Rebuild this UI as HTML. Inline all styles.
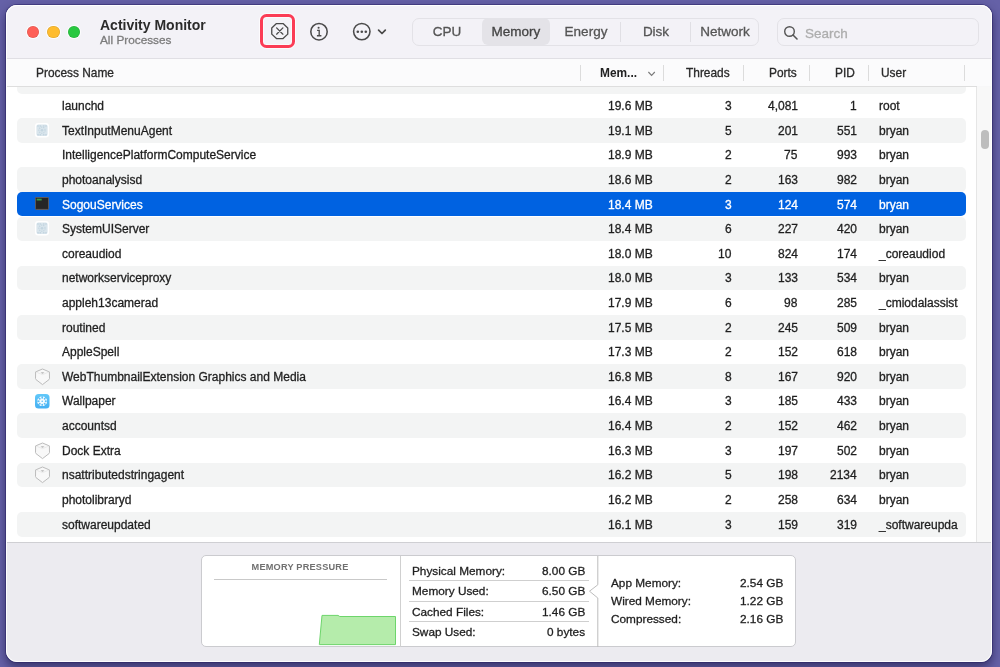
<!DOCTYPE html>
<html><head><meta charset="utf-8">
<style>
* { margin:0; padding:0; box-sizing:border-box; }
html,body { width:1000px; height:667px; overflow:hidden; }
body { font-family:"Liberation Sans", sans-serif; position:relative;
  background:#6561a7; }
.t { position:absolute; white-space:nowrap; line-height:normal; -webkit-text-stroke:0.3px currentColor; will-change:transform; }
#win { position:absolute; left:6px; top:5px; width:986px; height:657px; border-radius:11px;
  background:#ecebf0; overflow:hidden; box-shadow: 0 0 0 1px rgba(40,34,100,0.5), 0 3px 10px rgba(15,10,50,0.42), 0 8px 8px rgba(15,10,50,0.18); }
#winhl { position:absolute; left:6px; top:5px; width:986px; height:657px; border-radius:11px; border:1px solid rgba(255,255,255,0.95); z-index:50; }
#toolbar { position:absolute; left:6px; top:5px; width:986px; height:53.9px; background:#f3f2f7; border-bottom:1px solid #e0dfe4; border-radius:11px 11px 0 0; }
.tl { position:absolute; top:25.6px; width:12.6px; height:12.6px; border-radius:50%; box-shadow: inset 0 0 0 0.6px rgba(0,0,0,0.13), 0 0 0 1px rgba(255,255,255,0.85); }
#killbox { position:absolute; left:259.8px; top:13.8px; width:35.5px; height:34.2px; border:3.3px solid #fb3c55; border-radius:6.5px; box-shadow:0 0 0 1px rgba(255,255,255,0.7), inset 0 0 0 1px rgba(255,255,255,0.6); }
.abs { position:absolute; }
#seg { position:absolute; left:412px; top:17.5px; width:347px; height:28px; border:1px solid #e3e2e7; border-radius:7px; background:#f3f2f7; }
.segsel { position:absolute; left:481.5px; top:18.1px; width:68.5px; height:27px; background:#e4e3e8; border-radius:6px; }
.segdiv { position:absolute; top:22px; width:1px; height:19.5px; background:#e0dfe4; }
#search { position:absolute; left:777.3px; top:17.7px; width:201.7px; height:28px; border:1px solid #e3e2e7; border-radius:7px; background:#f3f2f7; }
#header { position:absolute; left:7px; top:58.9px; width:984px; height:28px; background:#fbfbfc; border-bottom:1px solid #dedede; }
.hdiv { position:absolute; top:65px; width:1px; height:15.5px; background:#dcdcdc; }
#table { position:absolute; left:7px; top:86.9px; width:984px; height:456.1px; background:#fff; overflow:hidden; border-bottom:1px solid #cfcfd3; }
#rows { position:absolute; left:-7px; top:-86.9px; width:1000px; height:667px; }
.row { position:absolute; left:16.7px; width:949.3px; height:24.67px; border-radius:5px; }
.row.stripe { background:#f3f4f4; }
.row.sel { background:#0062e1; height:24.2px; }
.ic { position:absolute; line-height:0; }
#scroll { position:absolute; left:969.4px; top:0; width:15px; height:456px; background:#f8f8f8; border-left:1px solid #e6e6e6; }
#thumb { position:absolute; left:3.7px; top:43.6px; width:7.8px; height:18.2px; border-radius:4px; background:#bdbdbd; }
#panel { position:absolute; left:201.4px; top:554.7px; width:595px; height:92.2px; background:#fff; border:1px solid #cbcbcf; border-radius:5px; }
#mpline { position:absolute; left:213.8px; top:578.6px; width:173px; height:1.2px; background:#c9c9c9; }
.msep { position:absolute; left:408.8px; width:180.5px; height:1px; background:#cfcfcf; }
</style></head><body>
<div id="win"></div>
<div id="toolbar"></div>
<div class="tl" style="left:26.7px;background:#fe5f57;"></div>
<div class="tl" style="left:47.2px;background:#febc2e;"></div>
<div class="tl" style="left:67.7px;background:#28c840;"></div>
<div class="t" style="left:99.80px;top:17.13px;font-size:14px;color:#2b2b2b;font-weight:700;-webkit-text-stroke:0;">Activity Monitor</div>
<div class="t" style="left:99.80px;top:33.32px;font-size:11.8px;color:#7b7b7b;">All Processes</div>
<div id="killbox"></div>
<svg class="abs" style="left:270px;top:22px" width="20" height="19" viewBox="0 0 20 19"><path d="M6.45 1.55 L13.05 1.55 L17.75 5.95 L17.75 12.15 L13.05 16.55 L6.45 16.55 L1.75 12.15 L1.75 5.95 Z" fill="none" stroke="#4a4a4a" stroke-width="1.3" stroke-linejoin="round"/><path d="M6.6 5.9 L12.9 12.2 M12.9 5.9 L6.6 12.2" stroke="#4a4a4a" stroke-width="1.25" stroke-linecap="round"/></svg>
<svg class="abs" style="left:309.1px;top:21.5px" width="20" height="20" viewBox="0 0 20 20"><circle cx="10" cy="9.7" r="8.2" fill="none" stroke="#4a4a4a" stroke-width="1.55"/><circle cx="9.6" cy="5.8" r="1.05" fill="#4a4a4a"/><path d="M8.1 8.4 L10.2 8.4 L10.2 13.7 M7.9 13.75 L12.4 13.75" fill="none" stroke="#4a4a4a" stroke-width="1.35"/></svg>
<svg class="abs" style="left:351.5px;top:22px" width="20" height="20" viewBox="0 0 20 20"><circle cx="9.8" cy="9.6" r="8.2" fill="none" stroke="#4a4a4a" stroke-width="1.55"/><circle cx="5.8" cy="9.7" r="1.3" fill="#4a4a4a"/><circle cx="9.8" cy="9.7" r="1.3" fill="#4a4a4a"/><circle cx="13.8" cy="9.7" r="1.3" fill="#4a4a4a"/></svg>
<svg class="abs" style="left:376px;top:27px" width="12" height="9" viewBox="0 0 12 9"><path d="M2.6 3.1 L6 6.5 L9.3 3.1" fill="none" stroke="#4a4a4a" stroke-width="1.75" stroke-linecap="round" stroke-linejoin="round"/></svg>
<div id="seg"></div>
<div class="segsel"></div>
<div class="segdiv" style="left:620px"></div>
<div class="segdiv" style="left:689.8px"></div>
<div class="t" style="left:446.50px;top:23.88px;font-size:13.5px;color:#555;transform:translateX(-50%)">CPU</div>
<div class="t" style="left:516.00px;top:23.88px;font-size:13.5px;color:#444;transform:translateX(-50%)">Memory</div>
<div class="t" style="left:585.50px;top:23.88px;font-size:13.5px;color:#555;transform:translateX(-50%)">Energy</div>
<div class="t" style="left:655.50px;top:23.88px;font-size:13.5px;color:#555;transform:translateX(-50%)">Disk</div>
<div class="t" style="left:725.00px;top:23.88px;font-size:13.5px;color:#555;transform:translateX(-50%)">Network</div>
<div id="search"></div>
<svg class="abs" style="left:783px;top:25px" width="16" height="16" viewBox="0 0 16 16"><circle cx="6.5" cy="6.5" r="4.8" fill="none" stroke="#555" stroke-width="1.4"/><path d="M10 10 L14 14" stroke="#555" stroke-width="1.6" stroke-linecap="round"/></svg>
<div class="t" style="left:805.20px;top:25.98px;font-size:13.5px;color:#adadad;">Search</div>
<div id="header"></div>
<div class="t" style="left:36.40px;top:66.13px;font-size:11.9px;color:#2a2a2a;">Process Name</div>
<div class="t" style="left:599.50px;top:66.13px;font-size:11.9px;color:#222;font-weight:700;-webkit-text-stroke:0;">Mem...</div>
<div class="t" style="right:270.20px;top:66.13px;font-size:11.9px;color:#2a2a2a;">Threads</div>
<div class="t" style="right:203.50px;top:66.13px;font-size:11.9px;color:#2a2a2a;">Ports</div>
<div class="t" style="right:145.20px;top:66.13px;font-size:11.9px;color:#2a2a2a;">PID</div>
<div class="t" style="left:881.20px;top:66.13px;font-size:11.9px;color:#2a2a2a;">User</div>
<div class="hdiv" style="left:580.25px"></div>
<div class="hdiv" style="left:663.25px"></div>
<div class="hdiv" style="left:742.50px"></div>
<div class="hdiv" style="left:809.00px"></div>
<div class="hdiv" style="left:867.50px"></div>
<div class="hdiv" style="left:964.00px"></div>
<svg class="abs" style="left:646px;top:70px" width="11" height="8" viewBox="0 0 11 8"><path d="M2.4 2 L5.6 5.3 L8.8 2" fill="none" stroke="#7a7a7a" stroke-width="1.15"/></svg>
<div class="abs" style="left:977px;top:86px;width:14px;height:1.5px;background:#f7f7f8"></div>
<div id="table">
 <div id="rows">
<div class="row stripe" style="top:68.89px"></div>
<div class="row" style="top:93.50px"></div>
<div class="t" style="left:61.60px;top:99.14px;font-size:12.0px;color:#1f1f1f;">launchd</div>
<div class="t" style="right:347.40px;top:99.14px;font-size:12.0px;color:#1f1f1f;">19.6 MB</div>
<div class="t" style="right:268.50px;top:99.14px;font-size:12.0px;color:#1f1f1f;">3</div>
<div class="t" style="right:202.30px;top:99.14px;font-size:12.0px;color:#1f1f1f;">4,081</div>
<div class="t" style="right:143.40px;top:99.14px;font-size:12.0px;color:#1f1f1f;">1</div>
<div class="t" style="left:879.10px;top:99.14px;font-size:12.0px;color:#1f1f1f;">root</div>
<div class="row stripe" style="top:118.11px"></div>
<div class="ic" style="left:34.90px;top:123.01px"><svg width="14" height="15" viewBox="0 0 14 15"><rect x="0" y="0" width="14" height="14.5" rx="3" fill="#fff"/><rect x="1.4" y="1.4" width="11.2" height="11.7" rx="2" fill="#d9e5ec"/><g fill="#c3d5e0"><rect x="2.3" y="2.3" width="1.4" height="1.4"/><rect x="4.6" y="2.3" width="1.4" height="1.4"/><rect x="8" y="2.3" width="1.4" height="1.4"/><rect x="10.3" y="2.3" width="1.4" height="1.4"/><rect x="2.3" y="11" width="1.4" height="1.4"/><rect x="4.6" y="11" width="1.4" height="1.4"/><rect x="8" y="11" width="1.4" height="1.4"/><rect x="10.3" y="11" width="1.4" height="1.4"/></g><circle cx="7" cy="7.2" r="3.1" fill="none" stroke="#c3d5e0" stroke-width="1.1" stroke-dasharray="1.3 0.9"/><circle cx="7" cy="7.2" r="1.3" fill="#c3d5e0"/></svg></div>
<div class="t" style="left:61.60px;top:123.75px;font-size:12.0px;color:#1f1f1f;">TextInputMenuAgent</div>
<div class="t" style="right:347.40px;top:123.75px;font-size:12.0px;color:#1f1f1f;">19.1 MB</div>
<div class="t" style="right:268.50px;top:123.75px;font-size:12.0px;color:#1f1f1f;">5</div>
<div class="t" style="right:202.30px;top:123.75px;font-size:12.0px;color:#1f1f1f;">201</div>
<div class="t" style="right:143.40px;top:123.75px;font-size:12.0px;color:#1f1f1f;">551</div>
<div class="t" style="left:879.10px;top:123.75px;font-size:12.0px;color:#1f1f1f;">bryan</div>
<div class="row" style="top:142.72px"></div>
<div class="t" style="left:61.60px;top:148.36px;font-size:12.0px;color:#1f1f1f;">IntelligencePlatformComputeService</div>
<div class="t" style="right:347.40px;top:148.36px;font-size:12.0px;color:#1f1f1f;">18.9 MB</div>
<div class="t" style="right:268.50px;top:148.36px;font-size:12.0px;color:#1f1f1f;">2</div>
<div class="t" style="right:202.30px;top:148.36px;font-size:12.0px;color:#1f1f1f;">75</div>
<div class="t" style="right:143.40px;top:148.36px;font-size:12.0px;color:#1f1f1f;">993</div>
<div class="t" style="left:879.10px;top:148.36px;font-size:12.0px;color:#1f1f1f;">bryan</div>
<div class="row stripe" style="top:167.33px"></div>
<div class="t" style="left:61.60px;top:172.97px;font-size:12.0px;color:#1f1f1f;">photoanalysisd</div>
<div class="t" style="right:347.40px;top:172.97px;font-size:12.0px;color:#1f1f1f;">18.6 MB</div>
<div class="t" style="right:268.50px;top:172.97px;font-size:12.0px;color:#1f1f1f;">2</div>
<div class="t" style="right:202.30px;top:172.97px;font-size:12.0px;color:#1f1f1f;">163</div>
<div class="t" style="right:143.40px;top:172.97px;font-size:12.0px;color:#1f1f1f;">982</div>
<div class="t" style="left:879.10px;top:172.97px;font-size:12.0px;color:#1f1f1f;">bryan</div>
<div class="row sel" style="top:191.94px"></div>
<div class="ic" style="left:35.20px;top:197.44px"><svg width="14" height="13" viewBox="0 0 14 13"><rect x="0.4" y="0.4" width="13.2" height="12" rx="0.8" fill="#262626" stroke="#7a6550" stroke-width="0.8"/><rect x="1.7" y="1.7" width="5" height="1.8" fill="#3d9b45"/></svg></div>
<div class="t" style="left:61.60px;top:197.58px;font-size:12.0px;color:#ffffff;">SogouServices</div>
<div class="t" style="right:347.40px;top:197.58px;font-size:12.0px;color:#ffffff;">18.4 MB</div>
<div class="t" style="right:268.50px;top:197.58px;font-size:12.0px;color:#ffffff;">3</div>
<div class="t" style="right:202.30px;top:197.58px;font-size:12.0px;color:#ffffff;">124</div>
<div class="t" style="right:143.40px;top:197.58px;font-size:12.0px;color:#ffffff;">574</div>
<div class="t" style="left:879.10px;top:197.58px;font-size:12.0px;color:#ffffff;">bryan</div>
<div class="row stripe" style="top:216.55px"></div>
<div class="ic" style="left:34.90px;top:221.45px"><svg width="14" height="15" viewBox="0 0 14 15"><rect x="0" y="0" width="14" height="14.5" rx="3" fill="#fff"/><rect x="1.4" y="1.4" width="11.2" height="11.7" rx="2" fill="#d9e5ec"/><g fill="#c3d5e0"><rect x="2.3" y="2.3" width="1.4" height="1.4"/><rect x="4.6" y="2.3" width="1.4" height="1.4"/><rect x="8" y="2.3" width="1.4" height="1.4"/><rect x="10.3" y="2.3" width="1.4" height="1.4"/><rect x="2.3" y="11" width="1.4" height="1.4"/><rect x="4.6" y="11" width="1.4" height="1.4"/><rect x="8" y="11" width="1.4" height="1.4"/><rect x="10.3" y="11" width="1.4" height="1.4"/></g><circle cx="7" cy="7.2" r="3.1" fill="none" stroke="#c3d5e0" stroke-width="1.1" stroke-dasharray="1.3 0.9"/><circle cx="7" cy="7.2" r="1.3" fill="#c3d5e0"/></svg></div>
<div class="t" style="left:61.60px;top:222.19px;font-size:12.0px;color:#1f1f1f;">SystemUIServer</div>
<div class="t" style="right:347.40px;top:222.19px;font-size:12.0px;color:#1f1f1f;">18.4 MB</div>
<div class="t" style="right:268.50px;top:222.19px;font-size:12.0px;color:#1f1f1f;">6</div>
<div class="t" style="right:202.30px;top:222.19px;font-size:12.0px;color:#1f1f1f;">227</div>
<div class="t" style="right:143.40px;top:222.19px;font-size:12.0px;color:#1f1f1f;">420</div>
<div class="t" style="left:879.10px;top:222.19px;font-size:12.0px;color:#1f1f1f;">bryan</div>
<div class="row" style="top:241.16px"></div>
<div class="t" style="left:61.60px;top:246.80px;font-size:12.0px;color:#1f1f1f;">coreaudiod</div>
<div class="t" style="right:347.40px;top:246.80px;font-size:12.0px;color:#1f1f1f;">18.0 MB</div>
<div class="t" style="right:268.50px;top:246.80px;font-size:12.0px;color:#1f1f1f;">10</div>
<div class="t" style="right:202.30px;top:246.80px;font-size:12.0px;color:#1f1f1f;">824</div>
<div class="t" style="right:143.40px;top:246.80px;font-size:12.0px;color:#1f1f1f;">174</div>
<div class="t" style="left:879.10px;top:246.80px;font-size:12.0px;color:#1f1f1f;">_coreaudiod</div>
<div class="row stripe" style="top:265.77px"></div>
<div class="t" style="left:61.60px;top:271.41px;font-size:12.0px;color:#1f1f1f;">networkserviceproxy</div>
<div class="t" style="right:347.40px;top:271.41px;font-size:12.0px;color:#1f1f1f;">18.0 MB</div>
<div class="t" style="right:268.50px;top:271.41px;font-size:12.0px;color:#1f1f1f;">3</div>
<div class="t" style="right:202.30px;top:271.41px;font-size:12.0px;color:#1f1f1f;">133</div>
<div class="t" style="right:143.40px;top:271.41px;font-size:12.0px;color:#1f1f1f;">534</div>
<div class="t" style="left:879.10px;top:271.41px;font-size:12.0px;color:#1f1f1f;">bryan</div>
<div class="row" style="top:290.38px"></div>
<div class="t" style="left:61.60px;top:296.02px;font-size:12.0px;color:#1f1f1f;">appleh13camerad</div>
<div class="t" style="right:347.40px;top:296.02px;font-size:12.0px;color:#1f1f1f;">17.9 MB</div>
<div class="t" style="right:268.50px;top:296.02px;font-size:12.0px;color:#1f1f1f;">6</div>
<div class="t" style="right:202.30px;top:296.02px;font-size:12.0px;color:#1f1f1f;">98</div>
<div class="t" style="right:143.40px;top:296.02px;font-size:12.0px;color:#1f1f1f;">285</div>
<div class="t" style="left:879.10px;top:296.02px;font-size:12.0px;color:#1f1f1f;">_cmiodalassist</div>
<div class="row stripe" style="top:314.99px"></div>
<div class="t" style="left:61.60px;top:320.63px;font-size:12.0px;color:#1f1f1f;">routined</div>
<div class="t" style="right:347.40px;top:320.63px;font-size:12.0px;color:#1f1f1f;">17.5 MB</div>
<div class="t" style="right:268.50px;top:320.63px;font-size:12.0px;color:#1f1f1f;">2</div>
<div class="t" style="right:202.30px;top:320.63px;font-size:12.0px;color:#1f1f1f;">245</div>
<div class="t" style="right:143.40px;top:320.63px;font-size:12.0px;color:#1f1f1f;">509</div>
<div class="t" style="left:879.10px;top:320.63px;font-size:12.0px;color:#1f1f1f;">bryan</div>
<div class="row" style="top:339.60px"></div>
<div class="t" style="left:61.60px;top:345.24px;font-size:12.0px;color:#1f1f1f;">AppleSpell</div>
<div class="t" style="right:347.40px;top:345.24px;font-size:12.0px;color:#1f1f1f;">17.3 MB</div>
<div class="t" style="right:268.50px;top:345.24px;font-size:12.0px;color:#1f1f1f;">2</div>
<div class="t" style="right:202.30px;top:345.24px;font-size:12.0px;color:#1f1f1f;">152</div>
<div class="t" style="right:143.40px;top:345.24px;font-size:12.0px;color:#1f1f1f;">618</div>
<div class="t" style="left:879.10px;top:345.24px;font-size:12.0px;color:#1f1f1f;">bryan</div>
<div class="row stripe" style="top:364.21px"></div>
<div class="ic" style="left:34.00px;top:367.91px"><svg width="17" height="18" viewBox="0 0 17 18"><path d="M8.5 1 L15.4 3.9 L15.5 10.6 Q15.5 11.2 15 11.6 L8.5 16.6 L2 11.6 Q1.5 11.2 1.5 10.6 L1.6 3.9 Z" fill="#f8f8f8" stroke="#bcbcbc" stroke-width="1" stroke-linejoin="round"/><path d="M1.9 4 L8.5 6.6 L15.1 4" fill="none" stroke="#e4e4e4" stroke-width="0.7"/><path d="M6.5 4.4 Q8.5 3.4 10.5 4.4 L8.5 5.9 Z" fill="#c2c2c2"/></svg></div>
<div class="t" style="left:61.60px;top:369.85px;font-size:12.0px;color:#1f1f1f;">WebThumbnailExtension Graphics and Media</div>
<div class="t" style="right:347.40px;top:369.85px;font-size:12.0px;color:#1f1f1f;">16.8 MB</div>
<div class="t" style="right:268.50px;top:369.85px;font-size:12.0px;color:#1f1f1f;">8</div>
<div class="t" style="right:202.30px;top:369.85px;font-size:12.0px;color:#1f1f1f;">167</div>
<div class="t" style="right:143.40px;top:369.85px;font-size:12.0px;color:#1f1f1f;">920</div>
<div class="t" style="left:879.10px;top:369.85px;font-size:12.0px;color:#1f1f1f;">bryan</div>
<div class="row" style="top:388.82px"></div>
<div class="ic" style="left:34.85px;top:393.87px"><svg width="15" height="15" viewBox="0 0 15 15"><defs><linearGradient id="wg" x1="0" y1="0" x2="0" y2="1"><stop offset="0" stop-color="#62c8f9"/><stop offset="1" stop-color="#45b0f3"/></linearGradient></defs><rect x="0" y="0" width="14.5" height="14.5" rx="3.5" fill="url(#wg)"/><g fill="#f6fcff"><circle cx="7.2" cy="7.25" r="3.9"/><circle cx="10.25" cy="8.51" r="1.75"/><circle cx="8.46" cy="10.30" r="1.75"/><circle cx="5.94" cy="10.30" r="1.75"/><circle cx="4.15" cy="8.51" r="1.75"/><circle cx="4.15" cy="5.99" r="1.75"/><circle cx="5.94" cy="4.20" r="1.75"/><circle cx="8.46" cy="4.20" r="1.75"/><circle cx="10.25" cy="5.99" r="1.75"/></g><g fill="#5bbdf5"><circle cx="10.70" cy="7.25" r="0.95"/><circle cx="9.67" cy="9.72" r="0.95"/><circle cx="7.20" cy="10.75" r="0.95"/><circle cx="4.73" cy="9.72" r="0.95"/><circle cx="3.70" cy="7.25" r="0.95"/><circle cx="4.73" cy="4.78" r="0.95"/><circle cx="7.20" cy="3.75" r="0.95"/><circle cx="9.67" cy="4.78" r="0.95"/><circle cx="7.2" cy="7.25" r="0.8"/></g></svg></div>
<div class="t" style="left:61.60px;top:394.46px;font-size:12.0px;color:#1f1f1f;">Wallpaper</div>
<div class="t" style="right:347.40px;top:394.46px;font-size:12.0px;color:#1f1f1f;">16.4 MB</div>
<div class="t" style="right:268.50px;top:394.46px;font-size:12.0px;color:#1f1f1f;">3</div>
<div class="t" style="right:202.30px;top:394.46px;font-size:12.0px;color:#1f1f1f;">185</div>
<div class="t" style="right:143.40px;top:394.46px;font-size:12.0px;color:#1f1f1f;">433</div>
<div class="t" style="left:879.10px;top:394.46px;font-size:12.0px;color:#1f1f1f;">bryan</div>
<div class="row stripe" style="top:413.43px"></div>
<div class="t" style="left:61.60px;top:419.07px;font-size:12.0px;color:#1f1f1f;">accountsd</div>
<div class="t" style="right:347.40px;top:419.07px;font-size:12.0px;color:#1f1f1f;">16.4 MB</div>
<div class="t" style="right:268.50px;top:419.07px;font-size:12.0px;color:#1f1f1f;">2</div>
<div class="t" style="right:202.30px;top:419.07px;font-size:12.0px;color:#1f1f1f;">152</div>
<div class="t" style="right:143.40px;top:419.07px;font-size:12.0px;color:#1f1f1f;">462</div>
<div class="t" style="left:879.10px;top:419.07px;font-size:12.0px;color:#1f1f1f;">bryan</div>
<div class="row" style="top:438.04px"></div>
<div class="ic" style="left:34.00px;top:441.74px"><svg width="17" height="18" viewBox="0 0 17 18"><path d="M8.5 1 L15.4 3.9 L15.5 10.6 Q15.5 11.2 15 11.6 L8.5 16.6 L2 11.6 Q1.5 11.2 1.5 10.6 L1.6 3.9 Z" fill="#f8f8f8" stroke="#bcbcbc" stroke-width="1" stroke-linejoin="round"/><path d="M1.9 4 L8.5 6.6 L15.1 4" fill="none" stroke="#e4e4e4" stroke-width="0.7"/><path d="M6.5 4.4 Q8.5 3.4 10.5 4.4 L8.5 5.9 Z" fill="#c2c2c2"/></svg></div>
<div class="t" style="left:61.60px;top:443.68px;font-size:12.0px;color:#1f1f1f;">Dock Extra</div>
<div class="t" style="right:347.40px;top:443.68px;font-size:12.0px;color:#1f1f1f;">16.3 MB</div>
<div class="t" style="right:268.50px;top:443.68px;font-size:12.0px;color:#1f1f1f;">3</div>
<div class="t" style="right:202.30px;top:443.68px;font-size:12.0px;color:#1f1f1f;">197</div>
<div class="t" style="right:143.40px;top:443.68px;font-size:12.0px;color:#1f1f1f;">502</div>
<div class="t" style="left:879.10px;top:443.68px;font-size:12.0px;color:#1f1f1f;">bryan</div>
<div class="row stripe" style="top:462.65px"></div>
<div class="ic" style="left:34.00px;top:466.35px"><svg width="17" height="18" viewBox="0 0 17 18"><path d="M8.5 1 L15.4 3.9 L15.5 10.6 Q15.5 11.2 15 11.6 L8.5 16.6 L2 11.6 Q1.5 11.2 1.5 10.6 L1.6 3.9 Z" fill="#f8f8f8" stroke="#bcbcbc" stroke-width="1" stroke-linejoin="round"/><path d="M1.9 4 L8.5 6.6 L15.1 4" fill="none" stroke="#e4e4e4" stroke-width="0.7"/><path d="M6.5 4.4 Q8.5 3.4 10.5 4.4 L8.5 5.9 Z" fill="#c2c2c2"/></svg></div>
<div class="t" style="left:61.60px;top:468.29px;font-size:12.0px;color:#1f1f1f;">nsattributedstringagent</div>
<div class="t" style="right:347.40px;top:468.29px;font-size:12.0px;color:#1f1f1f;">16.2 MB</div>
<div class="t" style="right:268.50px;top:468.29px;font-size:12.0px;color:#1f1f1f;">5</div>
<div class="t" style="right:202.30px;top:468.29px;font-size:12.0px;color:#1f1f1f;">198</div>
<div class="t" style="right:143.40px;top:468.29px;font-size:12.0px;color:#1f1f1f;">2134</div>
<div class="t" style="left:879.10px;top:468.29px;font-size:12.0px;color:#1f1f1f;">bryan</div>
<div class="row" style="top:487.26px"></div>
<div class="t" style="left:61.60px;top:492.90px;font-size:12.0px;color:#1f1f1f;">photolibraryd</div>
<div class="t" style="right:347.40px;top:492.90px;font-size:12.0px;color:#1f1f1f;">16.2 MB</div>
<div class="t" style="right:268.50px;top:492.90px;font-size:12.0px;color:#1f1f1f;">2</div>
<div class="t" style="right:202.30px;top:492.90px;font-size:12.0px;color:#1f1f1f;">258</div>
<div class="t" style="right:143.40px;top:492.90px;font-size:12.0px;color:#1f1f1f;">634</div>
<div class="t" style="left:879.10px;top:492.90px;font-size:12.0px;color:#1f1f1f;">bryan</div>
<div class="row stripe" style="top:511.87px"></div>
<div class="t" style="left:61.60px;top:517.51px;font-size:12.0px;color:#1f1f1f;">softwareupdated</div>
<div class="t" style="right:347.40px;top:517.51px;font-size:12.0px;color:#1f1f1f;">16.1 MB</div>
<div class="t" style="right:268.50px;top:517.51px;font-size:12.0px;color:#1f1f1f;">3</div>
<div class="t" style="right:202.30px;top:517.51px;font-size:12.0px;color:#1f1f1f;">159</div>
<div class="t" style="right:143.40px;top:517.51px;font-size:12.0px;color:#1f1f1f;">319</div>
<div class="t" style="left:879.10px;top:517.51px;font-size:12.0px;color:#1f1f1f;">_softwareupda</div>
 </div>
 <div id="scroll"><div id="thumb"></div></div>
</div>
<div id="panel"></div>
<div class="abs" style="left:400px;top:556px;width:1px;height:90.5px;background:#d0d0d0"></div>
<svg class="abs" style="left:585px;top:556px" width="16" height="91" viewBox="0 0 16 91"><path d="M12.8 0 L12.8 28.8 L4.5 35.2 L12.8 42 L12.8 91" fill="none" stroke="#bdbdbd" stroke-width="1"/></svg>
<div id="mpline"></div>
<svg class="abs" style="left:300px;top:600px" width="100" height="50" viewBox="0 0 100 50"><path d="M19.3 44.6 L22 15.4 L38 15.4 L39.8 16.5 L95.5 16.5 L95.5 44.6 Z" fill="#b5ecab" stroke="#6dd56b" stroke-width="1"/></svg>
<div class="t" style="left:411.90px;top:563.92px;font-size:11.8px;color:#1f1f1f;">Physical Memory:</div>
<div class="t" style="right:414.80px;top:563.92px;font-size:11.8px;color:#1f1f1f;">8.00 GB</div>
<div class="t" style="left:411.90px;top:584.12px;font-size:11.8px;color:#1f1f1f;">Memory Used:</div>
<div class="t" style="right:414.80px;top:584.12px;font-size:11.8px;color:#1f1f1f;">6.50 GB</div>
<div class="t" style="left:411.90px;top:604.52px;font-size:11.8px;color:#1f1f1f;">Cached Files:</div>
<div class="t" style="right:414.80px;top:604.52px;font-size:11.8px;color:#1f1f1f;">1.46 GB</div>
<div class="t" style="left:411.90px;top:625.22px;font-size:11.8px;color:#1f1f1f;">Swap Used:</div>
<div class="t" style="right:414.80px;top:625.22px;font-size:11.8px;color:#1f1f1f;">0 bytes</div>
<div class="msep" style="top:579.90px"></div>
<div class="msep" style="top:600.50px"></div>
<div class="msep" style="top:621.20px"></div>
<div class="t" style="left:610.90px;top:575.62px;font-size:11.8px;color:#1f1f1f;">App Memory:</div>
<div class="t" style="right:216.80px;top:575.62px;font-size:11.8px;color:#1f1f1f;">2.54 GB</div>
<div class="t" style="left:610.90px;top:594.02px;font-size:11.8px;color:#1f1f1f;">Wired Memory:</div>
<div class="t" style="right:216.80px;top:594.02px;font-size:11.8px;color:#1f1f1f;">1.22 GB</div>
<div class="t" style="left:610.90px;top:612.22px;font-size:11.8px;color:#1f1f1f;">Compressed:</div>
<div class="t" style="right:216.80px;top:612.22px;font-size:11.8px;color:#1f1f1f;">2.16 GB</div>
<div class="t" style="left:299.80px;top:562.07px;font-size:9.2px;color:#707070;font-weight:700;-webkit-text-stroke:0;transform:translateX(-50%);letter-spacing:0.2px;">MEMORY PRESSURE</div>
<div id="winhl"></div>
</body></html>
